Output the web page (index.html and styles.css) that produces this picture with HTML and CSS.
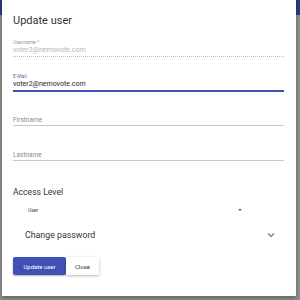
FILE: index.html
```html
<!DOCTYPE html>
<html>
<head>
<meta charset="utf-8">
<link rel="stylesheet" href="styles.css">
</head>
<body>
<div class="backdrop">
  <div class="toolbar"></div>
</div>
<div class="dialog">
  <h1 class="title">Update user</h1>
  <div class="field disabled">
    <label class="label">Username *</label>
    <div class="value">voter2@nemovote.com</div>
  </div>
  <div class="field focused">
    <label class="label">E-Mail</label>
    <div class="value">voter2@nemovote.com</div>
  </div>
  <div class="field empty">
    <div class="placeholder">Firstname</div>
  </div>
  <div class="field empty">
    <div class="placeholder">Lastname</div>
  </div>
  <div class="section">Access Level</div>
  <div class="select">
    <span class="select-value">User</span>
    <span class="select-arrow"></span>
  </div>
  <div class="expander">
    <span class="expander-title">Change password</span>
    <svg class="chevron" width="8" height="6" viewBox="0 0 8 6"><path d="M1 1.5 L4 4.5 L7 1.5" fill="none" stroke="#777" stroke-width="1.2"/></svg>
  </div>
  <div class="actions">
    <button class="btn primary">Update user</button>
    <button class="btn plain">Close</button>
  </div>
</div>
</body>
</html>
```
FILE: styles.css
```css
html, body {
  margin: 0;
  padding: 0;
  width: 300px;
  height: 300px;
  overflow: hidden;
  background: #8e8e8e;
  font-family: Roboto, "Liberation Sans", sans-serif;
}
.backdrop {
  height: 300px;
}
.toolbar {
  height: 15px;
  background: #2d3a82;
}
.dialog {
  position: absolute;
  left: 2px;
  top: -10px;
  width: 294px;
  height: 306px;
  box-sizing: border-box;
  background: #fff;
  box-shadow: 0 2px 4px rgba(0,0,0,0.3);
  padding: 10px 11px 0 11px;
  display: flex;
  flex-direction: column;
}
.title {
  margin: 14px 0 0 0;
  font-size: 11px;
  font-weight: 400;
  color: #333;
  line-height: 13px;
  height: 13px;
}
.field {
  border-bottom: 1px solid #9e9e9e;
  display: flex;
  flex-direction: column;
  margin-right: 1px;
}
.field.disabled {
  margin-top: 12px;
  border-bottom: 1px dotted #bdbdbd;
}
.field.focused {
  margin-top: 16px;
  border-bottom: 2px solid #3f51b5;
}
.field.empty {
  margin-top: 23px;
  height: 10px;
  border-bottom-color: #c8c8c8;
}
.field.empty + .field.empty {
  margin-top: 24px;
}
.label {
  font-size: 5px;
  line-height: 6px;
  color: #9a9a9a;
}
.focused .label {
  color: #5c6bc0;
}
.value {
  font-size: 7px;
  line-height: 11px;
  color: #222;
}
.disabled .value {
  color: #b5b5b5;
}
.placeholder {
  font-size: 6.5px;
  line-height: 10px;
  color: #8a8a8a;
}
.section {
  margin-top: 26px;
  font-size: 8.6px;
  line-height: 10px;
  color: #333;
}
.select {
  margin-top: 8px;
  display: flex;
  align-items: center;
  justify-content: space-between;
  padding: 0 43px 0 15px;
  height: 10px;
}
.select-value {
  font-size: 5px;
  color: #444;
}
.select-arrow {
  width: 0;
  height: 0;
  border-left: 2.5px solid transparent;
  border-right: 2.5px solid transparent;
  border-top: 2.5px solid #666;
}
.expander {
  margin-top: 14px;
  display: flex;
  align-items: center;
  justify-content: space-between;
  padding: 0 10px 0 12px;
  height: 12px;
}
.expander-title {
  font-size: 8.8px;
  color: #333;
}
.actions {
  margin-top: 16px;
  display: flex;
}
.btn {
  font-family: inherit;
  font-size: 6px;
  height: 18px;
  border: none;
  border-radius: 2px;
  padding: 0 6px;
  margin: 0;
}
.btn.primary {
  background: #3f51b5;
  color: #fff;
  width: 53px;
  box-shadow: 0 1px 2px rgba(0,0,0,0.3);
}
.btn.plain {
  background: #fff;
  color: #333;
  width: 33px;
  box-shadow: 0 1px 3px rgba(0,0,0,0.3);
}
```
